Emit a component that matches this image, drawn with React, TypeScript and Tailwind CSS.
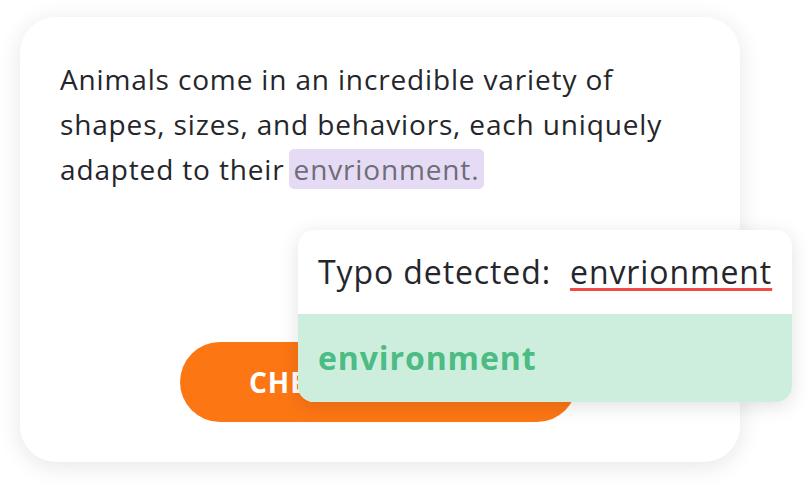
export default function App() {
  return (
    <div
      className="relative w-[808px] h-[484px] bg-white overflow-hidden"
      style={{ fontFamily: '"Open Sans", "Noto Sans", sans-serif' }}
    >
      <div className="absolute left-[20px] top-[17px] w-[720px] h-[445px] rounded-[36px] bg-white shadow-[0_4px_24px_rgba(0,0,0,0.10)] pl-[40px] pt-[40px]">
        <p className="w-[620px] text-[28px] leading-[45px] tracking-[0.85px] text-[#24262b]">
          Animals come in an incredible variety of shapes, sizes, and behaviors, each uniquely adapted to their
          <span className="ml-[4px] rounded-[5px] bg-[#e6dbf4] px-[5px] py-[1px] text-[#6e6d78]">envrionment.</span>
        </p>
        <div className="mt-[150px] ml-[120px] flex h-[80px] w-[397px] items-center rounded-full bg-[#fd7614] pl-[69px]">
          <span className="text-[28px] font-bold tracking-[1px] text-white">CHECK TEXT</span>
        </div>
      </div>

      <div className="absolute left-[298px] top-[230px] w-[494px] overflow-hidden rounded-[16px] bg-white shadow-[0_4px_20px_rgba(0,0,0,0.12)]">
        <div className="flex h-[84px] items-center pl-[20px] text-[32px] tracking-[0.9px] text-[#24262b]">
          <span>Typo detected:</span>
          <span className="ml-[19px] underline decoration-[#f04b45] decoration-[3px] underline-offset-[4px]">
            envrionment
          </span>
        </div>
        <div className="flex h-[88px] items-center bg-[#cdeedd] pl-[20px] text-[32px] font-bold tracking-[0.9px] text-[#4cbb84]">
          environment
        </div>
      </div>
    </div>
  );
}
